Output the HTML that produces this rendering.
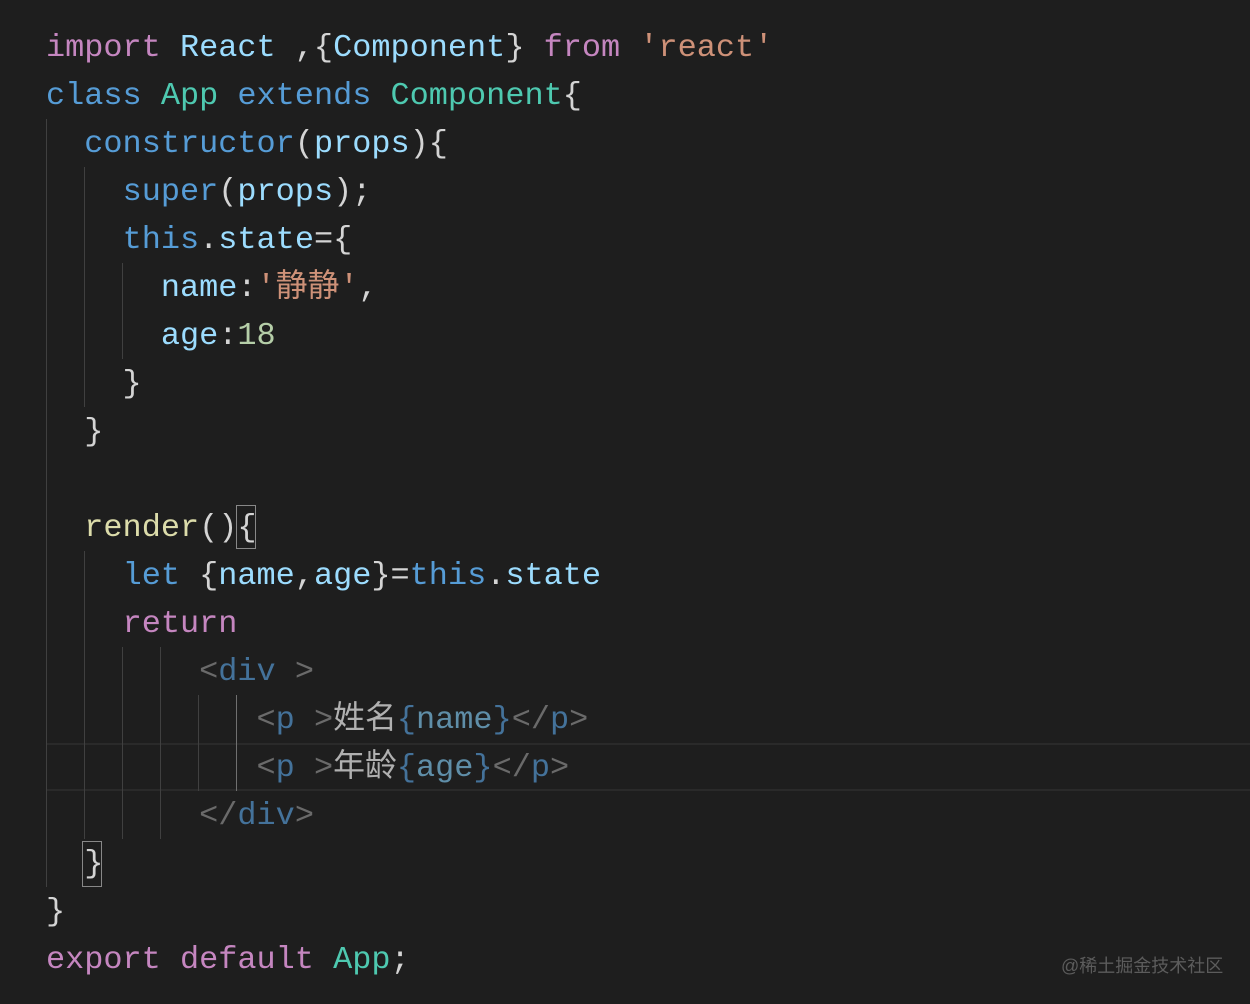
<!DOCTYPE html>
<html><head><meta charset="utf-8"><style>
html,body{margin:0;padding:0;background:#1e1e1e;width:1250px;height:1004px;overflow:hidden;position:relative}
.l{position:absolute;left:46px;height:48px;line-height:50px;white-space:pre;font-family:"Liberation Mono","Noto Sans CJK SC",monospace;font-size:31.9px;color:#d4d4d4}
.k{color:#c586c0}.v{color:#9cdcfe}.b{color:#569cd6}.t{color:#4ec9b0}.s{color:#ce9178}.n{color:#b5cea8}.f{color:#dcdcaa}
.dp{color:#6a6a6a}.dd{color:#44729a}.dc{color:#b0b0b0}.dv{color:#5f8ea8}
.g{position:absolute;width:1px;background:#404040}
.cur{position:absolute;left:46px;right:0;top:743px;height:44px;border-top:2px solid #2a2a2a;border-bottom:2px solid #2a2a2a}
.box{position:absolute;border:1px solid #888;box-sizing:border-box}
.wm{position:absolute;left:1061px;top:952px;font-family:"Liberation Sans","Noto Sans CJK SC",sans-serif;font-size:18px;color:#5c5c5c}
</style></head><body>
<div class="cur"></div>
<div class="g" style="left:46px;top:119px;height:768px"></div>
<div class="g" style="left:84px;top:167px;height:240px"></div>
<div class="g" style="left:122px;top:263px;height:96px"></div>
<div class="g" style="left:84px;top:551px;height:288px"></div>
<div class="g" style="left:122px;top:647px;height:192px"></div>
<div class="g" style="left:160px;top:647px;height:192px"></div>
<div class="g" style="left:198px;top:695px;height:96px"></div>
<div class="g" style="left:236px;top:695px;height:96px;background:#707070"></div>
<div class="box" style="left:236px;top:505px;width:20px;height:44px"></div>
<div class="box" style="left:82px;top:841px;width:20px;height:46px"></div>

<div class="l" style="top:23px"><span class="k">import</span> <span class="v">React</span> ,{<span class="v">Component</span>} <span class="k">from</span> <span class="s">'react'</span></div>
<div class="l" style="top:71px"><span class="b">class</span> <span class="t">App</span> <span class="b">extends</span> <span class="t">Component</span>{</div>
<div class="l" style="top:119px">  <span class="b">constructor</span>(<span class="v">props</span>){</div>
<div class="l" style="top:167px">    <span class="b">super</span>(<span class="v">props</span>);</div>
<div class="l" style="top:215px">    <span class="b">this</span>.<span class="v">state</span>={</div>
<div class="l" style="top:263px">      <span class="v">name</span>:<span class="s">'静静'</span>,</div>
<div class="l" style="top:311px">      <span class="v">age</span>:<span class="n">18</span></div>
<div class="l" style="top:359px">    }</div>
<div class="l" style="top:407px">  }</div>
<div class="l" style="top:503px">  <span class="f">render</span>(){</div>
<div class="l" style="top:551px">    <span class="b">let</span> {<span class="v">name</span>,<span class="v">age</span>}=<span class="b">this</span>.<span class="v">state</span></div>
<div class="l" style="top:599px">    <span class="k">return</span></div>
<div class="l" style="top:647px">        <span class="dp">&lt;</span><span class="dd">div</span> <span class="dp">&gt;</span></div>
<div class="l" style="top:695px">           <span class="dp">&lt;</span><span class="dd">p</span> <span class="dp">&gt;</span><span class="dc">姓名</span><span class="dd">{</span><span class="dv">name</span><span class="dd">}</span><span class="dp">&lt;/</span><span class="dd">p</span><span class="dp">&gt;</span></div>
<div class="l" style="top:743px">           <span class="dp">&lt;</span><span class="dd">p</span> <span class="dp">&gt;</span><span class="dc">年龄</span><span class="dd">{</span><span class="dv">age</span><span class="dd">}</span><span class="dp">&lt;/</span><span class="dd">p</span><span class="dp">&gt;</span></div>
<div class="l" style="top:791px">        <span class="dp">&lt;/</span><span class="dd">div</span><span class="dp">&gt;</span></div>
<div class="l" style="top:839px">  }</div>
<div class="l" style="top:887px">}</div>
<div class="l" style="top:935px"><span class="k">export</span> <span class="k">default</span> <span class="t">App</span>;</div>
<div class="wm">@稀土掘金技术社区</div>
</body></html>
